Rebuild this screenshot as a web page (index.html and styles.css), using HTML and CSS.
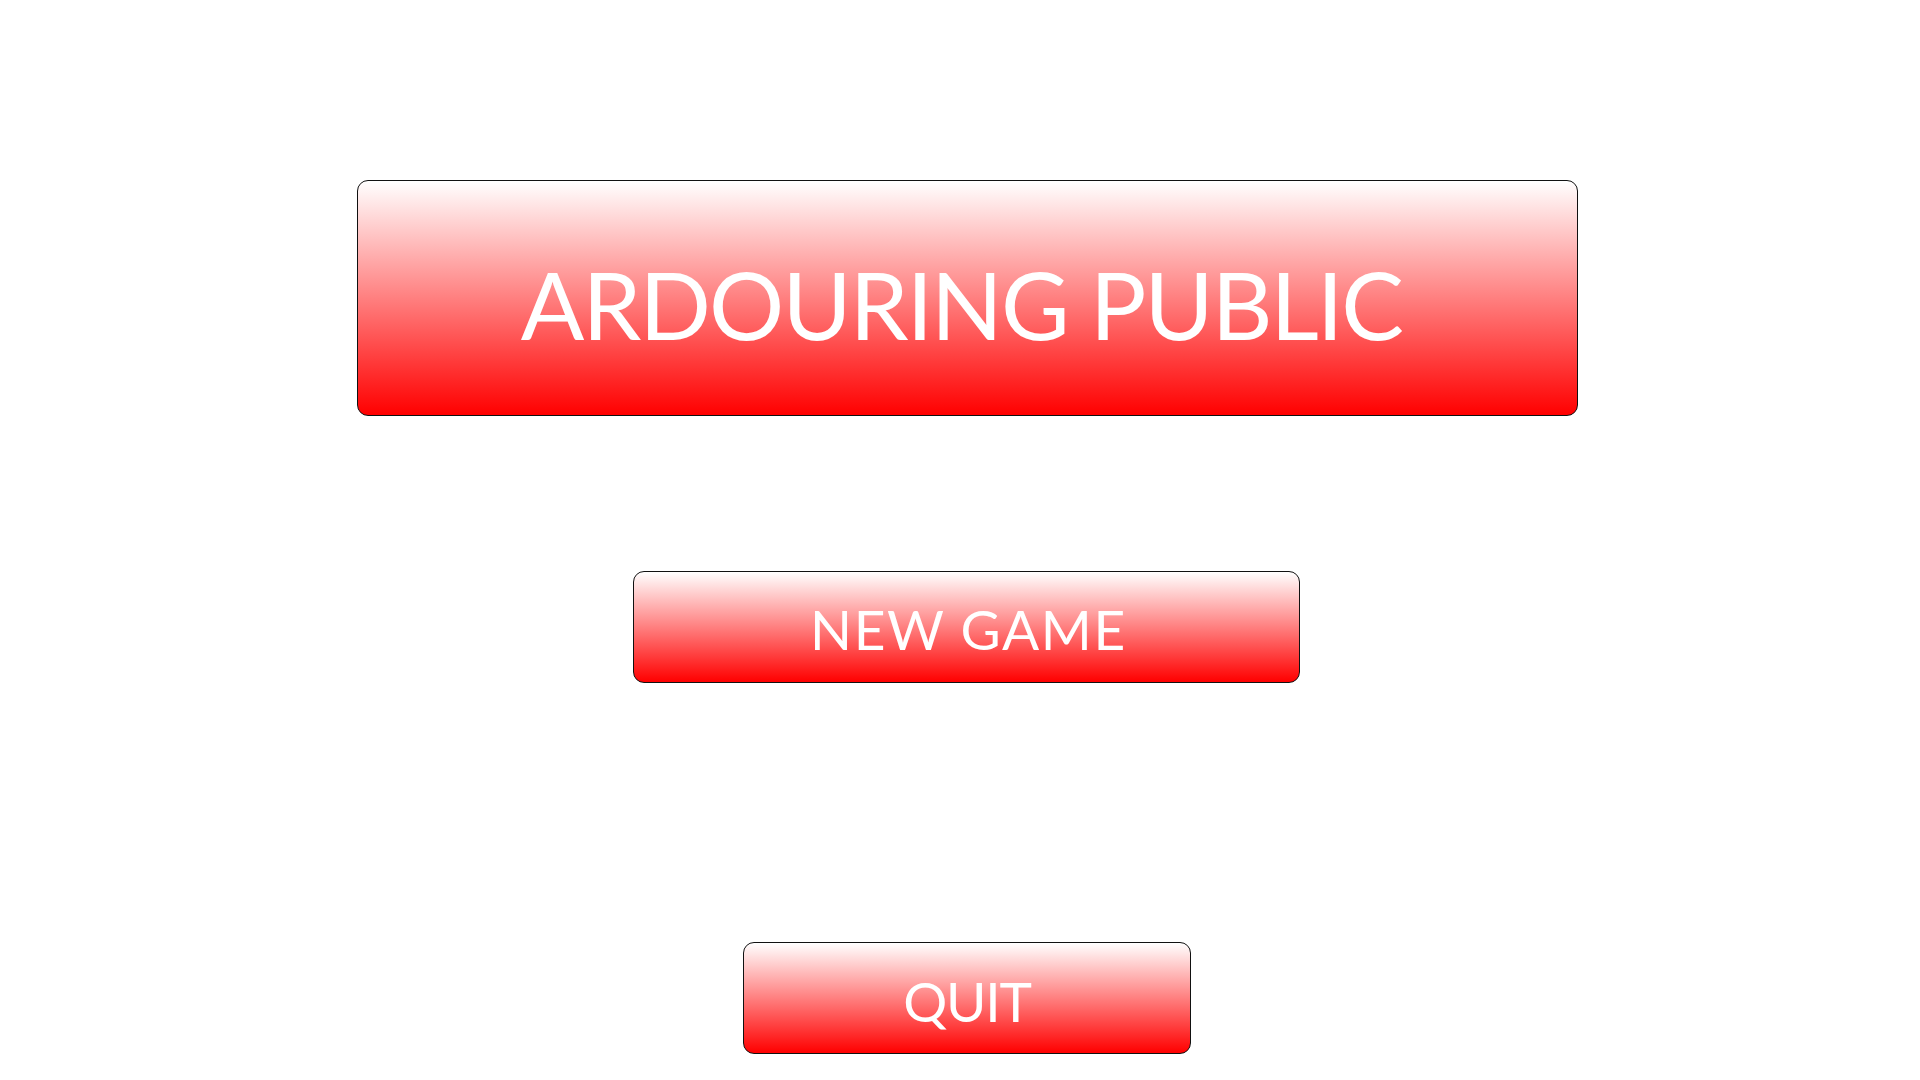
FILE: index.html
```html
<!DOCTYPE html>
<html>
<head>
<meta charset="utf-8">
<link rel="stylesheet" href="styles.css">
</head>
<body>
<main class="menu">
  <div class="panel title">ARDOURING PUBLIC</div>
  <button class="panel btn new-game">NEW GAME</button>
  <button class="panel btn quit">QUIT</button>
</main>
</body>
</html>
```
FILE: styles.css
```css
html, body {
  margin: 0;
  padding: 0;
  background: #ffffff;
  width: 1920px;
  height: 1080px;
  overflow: hidden;
}
.menu {
  display: flex;
  flex-direction: column;
  align-items: center;
  padding-top: 180px;
}
.panel {
  box-sizing: border-box;
  border: 1px solid #111;
  border-radius: 11px;
  background: linear-gradient(to bottom, #ffffff 0%, #ff0000 100%);
  color: #ffffff;
  font-family: Lato, "Open Sans", sans-serif;
  font-weight: 400;
  display: flex;
  align-items: center;
  justify-content: center;
  padding: 0;
  margin: 0;
  line-height: 1;
}
.title {
  width: 1221px;
  height: 236px;
  font-size: 94px;
  letter-spacing: -1.9px;
  padding-top: 11px;
  padding-right: 12px;
  margin-left: 15px;
}
.btn {
  height: 112px;
  font-size: 55px;
  padding-top: 5px;
}
.new-game {
  width: 667px;
  margin-top: 155px;
  margin-left: 13px;
  letter-spacing: 1.6px;
  padding-left: 4px;
}
.quit {
  width: 448px;
  margin-top: 259px;
  margin-left: 14px;
  letter-spacing: -1.2px;
  padding-top: 6px;
}
```
